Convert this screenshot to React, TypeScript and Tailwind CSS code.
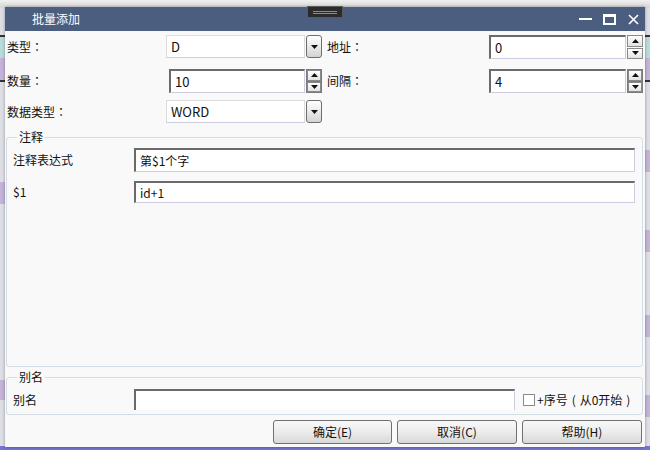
import React from "react";

const font = { fontFamily: '"Noto Sans CJK SC", "Noto Sans", sans-serif' };
const tc = { fontFamily: '"Noto Sans CJK TC", "Noto Sans CJK SC", sans-serif' };

function DownTri() {
  return (
    <svg width="7" height="4" viewBox="0 0 7 4">
      <path d="M0 0 L7 0 L3.5 4 Z" fill="#111" />
    </svg>
  );
}
function UpTri() {
  return (
    <svg width="7" height="4" viewBox="0 0 7 4">
      <path d="M0 4 L7 4 L3.5 0 Z" fill="#111" />
    </svg>
  );
}

function Combo({ value }: { value: string }) {
  return (
    <div className="flex h-[23px] items-stretch">
      <div className="flex-1 bg-white border border-[#dcdcdc] border-b-[#cfcbe0] flex items-center pl-[4px] text-[13px] text-[#111]">
        {value}
      </div>
      <div className="w-[16px] ml-[1px] rounded-[3px] border border-[#6e6e6e] bg-gradient-to-b from-[#ffffff] to-[#d4d4d4] flex items-center justify-center">
        <DownTri />
      </div>
    </div>
  );
}

function Spin({ value, dark }: { value: string; dark?: boolean }) {
  return (
    <div className="flex h-[24px] items-stretch">
      <div className="flex-1 bg-white border-t-2 border-l-2 border-t-[#6a6a6a] border-l-[#6a6a6a] border-r border-b border-r-[#cfcbe0] border-b-[#cfcbe0] flex items-center pl-[4px] text-[13px] text-[#111]">
        {value}
      </div>
      <div
        className={
          "w-[16px] ml-[1px] flex flex-col gap-[1px] " +
          (dark ? "bg-[#7a7a7a] p-[1px]" : "")
        }
      >
        <div className="flex-1 border border-[#8a8a8a] bg-gradient-to-b from-[#ffffff] to-[#e2e2e2] flex items-center justify-center">
          <UpTri />
        </div>
        <div className="flex-1 border border-[#8a8a8a] bg-gradient-to-b from-[#ffffff] to-[#e2e2e2] flex items-center justify-center">
          <DownTri />
        </div>
      </div>
    </div>
  );
}

function TextBox({ value, h, noBottom }: { value: string; h: string; noBottom?: boolean }) {
  return (
    <div
      className={
        "flex-1 bg-white border-t-2 border-l-2 border-t-[#6a6a6a] border-l-[#6a6a6a] border-r border-r-[#cfcbe0] flex items-center pl-[4px] text-[12px] text-[#111] " +
        h +
        (noBottom ? "" : " border-b border-b-[#cfcbe0]")
      }
    >
      {value}
    </div>
  );
}

function Btn({ label, w }: { label: string; w: string }) {
  return (
    <div
      className={
        "h-[24px] rounded-[3px] border border-[#707070] bg-gradient-to-b from-[#f8f8f8] via-[#ececec] to-[#d8d8d8] flex items-center justify-center text-[12px] text-[#111] " +
        w
      }
    >
      {label}
    </div>
  );
}

function Label({ text, cls }: { text: string; cls: string }) {
  return (
    <div className={"flex items-center " + cls}>
      {text}
      <span style={tc}>：</span>
    </div>
  );
}

export default function App() {
  return (
    <div className="w-[650px] h-[450px] relative overflow-hidden bg-[#dedee6]" style={font}>
      {/* desktop background bits */}
      <div className="absolute left-0 top-0 w-[650px] h-[8px] bg-gradient-to-b from-[#f0f0f0] to-[#d4d4d4]" />
      <div className="absolute left-0 top-[35px] w-[5px] h-[2px] bg-[#333]" />
      <div className="absolute left-0 top-[37px] w-[5px] h-[21px] bg-[#b8dcdc]" />
      <div className="absolute left-0 top-[58px] w-[5px] h-[22px] bg-[#c4b4d8]" />
      <div className="absolute left-0 top-[80px] w-[5px] h-[2px] bg-[#333]" />
      <div className="absolute left-0 top-[182px] w-[5px] h-[22px] bg-[#c4b4d8]" />
      <div className="absolute left-0 top-[380px] w-[5px] h-[20px] bg-[#c4b4d8]" />
      <div className="absolute left-[645px] top-[35px] w-[5px] h-[2px] bg-[#333]" />
      <div className="absolute left-[645px] top-[37px] w-[5px] h-[21px] bg-[#b8dcdc]" />
      <div className="absolute left-[645px] top-[58px] w-[5px] h-[22px] bg-[#c4b4d8]" />
      <div className="absolute left-[645px] top-[80px] w-[5px] h-[2px] bg-[#333]" />
      <div className="absolute left-[645px] top-[150px] w-[5px] h-[22px] bg-[#c4b4d8]" />
      <div className="absolute left-[645px] top-[230px] w-[5px] h-[22px] bg-[#c4b4d8]" />
      <div className="absolute left-[645px] top-[315px] w-[5px] h-[22px] bg-[#c4b4d8]" />
      <div className="absolute left-[645px] top-[395px] w-[5px] h-[22px] bg-[#c4b4d8]" />
      <div className="absolute left-0 top-[446px] w-[650px] h-[4px] bg-[#7474d4]" />

      {/* window */}
      <div className="absolute left-[5px] top-[7px] w-[640px] h-[440px] flex flex-col shadow-[0_0_3px_rgba(0,0,0,0.35)]">
        <div className="h-[24px] bg-[#4b5e80] flex items-center pl-[27px] pr-[6px] text-white text-[12px]">
          <span className="flex-1">批量添加</span>
          <div className="flex items-center">
            <div className="w-[13px] h-[2px] bg-white ml-[2px]" />
            <div className="w-[13px] h-[11px] border-2 border-t-[3px] border-white ml-[11px]" />
            <svg width="11" height="11" viewBox="0 0 11 11" className="ml-[12px]">
              <path d="M1 1 L10 10 M10 1 L1 10" stroke="white" strokeWidth="1.6" />
            </svg>
          </div>
        </div>

        <div className="flex-1 bg-[#f9f9f9] flex flex-col text-[12px] text-[#111]">
          <div className="grid grid-cols-[2px_159px_156px_167px_154px] gap-y-0 pt-[4px]">
            <div />
            <Label text="类型" cls="h-[23px]" />
            <Combo value="D" />
            <Label text="地址" cls="h-[23px] pl-[5px]" />
            <Spin value="0" />

            <div className="h-[10px] col-span-5" />

            <div />
            <Label text="数量" cls="h-[24px]" />
            <div className="pl-[3px]">
              <Spin value="10" dark />
            </div>
            <Label text="间隔" cls="h-[24px] pl-[5px]" />
            <Spin value="4" dark />

            <div className="h-[7px] col-span-5" />

            <div />
            <Label text="数据类型" cls="h-[23px]" />
            <Combo value="WORD" />
            <div />
            <div />
          </div>

          <fieldset className="mt-[6px] ml-[1px] mr-[2px] h-[238px] border border-[#d3dde4] rounded-[3px] pl-[6px] pr-[7px]">
            <legend className="ml-[4px] px-[2px] leading-[16px]">注释</legend>
            <div className="flex items-center mt-[3px]">
              <div className="w-[121px]">注释表达式</div>
              <TextBox value="第$1个字" h="h-[24px]" />
            </div>
            <div className="flex items-center mt-[9px]">
              <div className="w-[121px]">$1</div>
              <TextBox value="id+1" h="h-[22px]" />
            </div>
          </fieldset>

          <fieldset className="mt-[2px] ml-[1px] mr-[2px] h-[46px] border border-[#d3dde4] rounded-[3px] pl-[6px] pr-[7px] overflow-hidden">
            <legend className="ml-[4px] px-[2px] leading-[16px]">别名</legend>
            <div className="flex items-center mt-[4px]">
              <div className="w-[121px]">别名</div>
              <TextBox value="" h="h-[21px] max-w-[381px]" noBottom />
              <div className="w-[12px] h-[12px] border border-[#8a8a8a] bg-white ml-[8px]" />
              <span className="ml-[2px] flex items-center">
                +序号
                <span className="inline-block w-[12px] text-center">(</span>
                从0开始
                <span className="inline-block w-[12px] text-center">)</span>
              </span>
            </div>
          </fieldset>

          <div className="flex justify-end gap-[5px] pr-[3px] mt-[5px]">
            <Btn label="确定(E)" w="w-[119px]" />
            <Btn label="取消(C)" w="w-[120px]" />
            <Btn label="帮助(H)" w="w-[120px]" />
          </div>
        </div>
      </div>

      {/* title bar grip handle */}
      <div className="absolute left-[307px] top-[6px] w-[36px] h-[12px] bg-[#2b2b2b] border border-[#5a5a5a] flex flex-col items-center justify-center gap-[1px]">
        <div className="w-[24px] h-[1px] bg-[#8a8a8a]" />
        <div className="w-[24px] h-[1px] bg-[#8a8a8a]" />
      </div>
    </div>
  );
}
